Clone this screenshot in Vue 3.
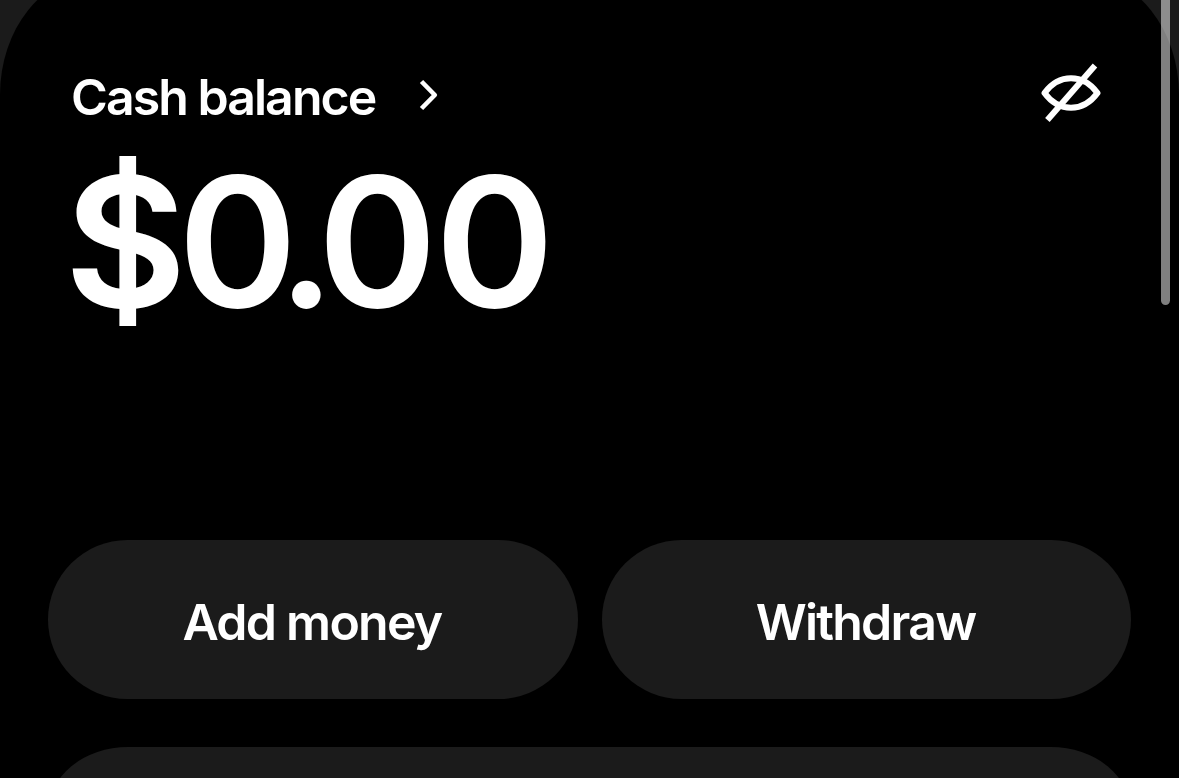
<template>
  <div class="screen">
    <main class="sheet">
      <header class="balance-head">
        <button class="balance-link">
          <span class="balance-title">Cash balance</span>
          <svg class="chevron" viewBox="0 0 20 32" fill="none" stroke="currentColor" stroke-width="4.6" stroke-linejoin="round">
            <path d="M2.5 2.5 15.8 16 2.5 29.5"/>
          </svg>
        </button>
        <button class="icon-btn" aria-label="Toggle balance visibility" @click="hidden = !hidden">
          <svg viewBox="0 0 60 60" fill="none" stroke="currentColor" stroke-width="6" stroke-linejoin="round">
            <path d="M3.5 30C18 10.3 42 10.3 56.5 30C42 49.7 18 49.7 3.5 30Z"/>
            <path d="M6.4 57 54 2.6"/>
          </svg>
        </button>
      </header>

      <div class="amount">
        <span class="sign">$</span>
        <span class="whole">{{ whole }}</span>
        <span class="dot">.</span>
        <span class="cents">{{ cents }}</span>
      </div>

      <div class="actions">
        <button v-for="a in actions" :key="a" class="action">{{ a }}</button>
      </div>

      <section class="next-card"></section>
    </main>
    <div class="scrollbar"></div>
  </div>
</template>

<script setup>
import { ref, computed } from 'vue'

const balance = ref(0)
const hidden = ref(false)
const actions = ['Add money', 'Withdraw']

const whole = computed(() => hidden.value ? '•' : balance.value.toFixed(2).split('.')[0])
const cents = computed(() => hidden.value ? '••' : balance.value.toFixed(2).split('.')[1])
</script>

<style>
body {
  margin: 0;
  overflow: hidden;
  background: #1b1b1b;
}
</style>

<style scoped>
.screen {
  position: relative;
  height: 778px;
  overflow: hidden;
  background: #1b1b1b;
  color: #fff;
  font-family: Inter, sans-serif;
}

/* The sheet is scrolled a little past its top edge */
.sheet {
  box-sizing: border-box;
  height: 900px;
  margin-top: -25px;
  padding: 85px 48px 0;
  border-radius: 96px 96px 0 0 / 120px 120px 0 0;
  background: #000;
}

button {
  padding: 0;
  border: none;
  background: transparent;
  color: inherit;
  font: inherit;
  cursor: pointer;
}

.balance-head {
  display: flex;
  justify-content: space-between;
  height: 74px;
  padding: 0 28px 0 24px;
}
.balance-link {
  display: flex;
  align-items: center;
}
.balance-title {
  width: 348px;
  margin-left: -1px;
  font-size: 50px;
  font-weight: 600;
  letter-spacing: -1.95px;
  text-align: left;
  white-space: nowrap;
}
.chevron {
  width: 20px;
  height: 32px;
  margin-bottom: 4px;
}
.icon-btn {
  width: 64px;
  height: 64px;
}
.icon-btn svg {
  display: block;
  width: 60px;
  height: 60px;
  margin: 2px 0 0 2px;
}

.amount {
  display: flex;
  height: 406px;
  padding-left: 16px;
  font-size: 181px;
  font-weight: 600;
  line-height: 215px;
}
.sign {
  position: relative;
  width: 109px;
  margin-right: 5px;
  letter-spacing: -9px;
  transform: scaleX(1.045);
  transform-origin: left;
}
/* Heavier stem than the font's own */
.sign::after {
  content: '';
  position: absolute;
  top: 22px;
  left: 52.6px;
  width: 16.5px;
  height: 170px;
  background: #fff;
}
.whole {
  letter-spacing: -20px;
}
.dot {
  letter-spacing: -17.5px;
}
.cents {
  letter-spacing: -2px;
}

.actions {
  display: grid;
  grid-template-columns: 530px 529px;
  gap: 24px;
}
.action {
  height: 159px;
  padding: 4px 2px 0 0;
  border-radius: 80px;
  background: #1b1b1b;
  font-size: 50px;
  font-weight: 600;
  letter-spacing: -1.75px;
}

.next-card {
  height: 200px;
  margin-top: 48px;
  border-radius: 80px / 66px;
  background: #1b1b1b;
}

.scrollbar {
  position: absolute;
  top: -20px;
  right: 9px;
  width: 9px;
  height: 325px;
  border-radius: 5px;
  background: rgba(255, 255, 255, 0.5);
}
</style>
